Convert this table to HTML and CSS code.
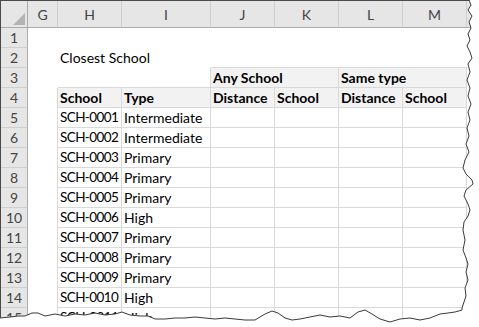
FILE: index.html
```html
<!DOCTYPE html>
<html>
<head>
<meta charset="utf-8">
<link rel="stylesheet" href="styles.css">
</head>
<body>
<div class="frame">
  <div class="sheet">
    <div class="ch corner"><span class="tri"></span></div>
    <div class="ch">G</div><div class="ch">H</div><div class="ch">I</div><div class="ch">J</div><div class="ch">K</div><div class="ch">L</div><div class="ch">M</div><div class="ch last"></div>

    <div class="rh">1</div><div class="c"></div><div class="c"></div><div class="c"></div><div class="c"></div><div class="c"></div><div class="c"></div><div class="c"></div><div class="c"></div>

    <div class="rh">2</div><div class="c"></div><div class="c title">Closest School</div><div class="c"></div><div class="c eb"></div><div class="c eb"></div><div class="c eb"></div><div class="c eb"></div><div class="c"></div>

    <div class="rh">3</div><div class="c"></div><div class="c eb"></div><div class="c eb er"></div><div class="c t th span2">Any School</div><div class="c t th span2">Same type</div><div class="c"></div>

    <div class="rh">4</div><div class="c er"></div><div class="c t th">School</div><div class="c t th">Type</div><div class="c t th">Distance</div><div class="c t th">School</div><div class="c t th">Distance</div><div class="c t th">School</div><div class="c"></div>

    <div class="rh">5</div><div class="c er"></div><div class="c t code">SCH-0001</div><div class="c t">Intermediate</div><div class="c t"></div><div class="c t"></div><div class="c t"></div><div class="c t"></div><div class="c"></div>
    <div class="rh">6</div><div class="c er"></div><div class="c t code">SCH-0002</div><div class="c t">Intermediate</div><div class="c t"></div><div class="c t"></div><div class="c t"></div><div class="c t"></div><div class="c"></div>
    <div class="rh">7</div><div class="c er"></div><div class="c t code">SCH-0003</div><div class="c t">Primary</div><div class="c t"></div><div class="c t"></div><div class="c t"></div><div class="c t"></div><div class="c"></div>
    <div class="rh">8</div><div class="c er"></div><div class="c t code">SCH-0004</div><div class="c t">Primary</div><div class="c t"></div><div class="c t"></div><div class="c t"></div><div class="c t"></div><div class="c"></div>
    <div class="rh">9</div><div class="c er"></div><div class="c t code">SCH-0005</div><div class="c t">Primary</div><div class="c t"></div><div class="c t"></div><div class="c t"></div><div class="c t"></div><div class="c"></div>
    <div class="rh">10</div><div class="c er"></div><div class="c t code">SCH-0006</div><div class="c t">High</div><div class="c t"></div><div class="c t"></div><div class="c t"></div><div class="c t"></div><div class="c"></div>
    <div class="rh">11</div><div class="c er"></div><div class="c t code">SCH-0007</div><div class="c t">Primary</div><div class="c t"></div><div class="c t"></div><div class="c t"></div><div class="c t"></div><div class="c"></div>
    <div class="rh">12</div><div class="c er"></div><div class="c t code">SCH-0008</div><div class="c t">Primary</div><div class="c t"></div><div class="c t"></div><div class="c t"></div><div class="c t"></div><div class="c"></div>
    <div class="rh">13</div><div class="c er"></div><div class="c t code">SCH-0009</div><div class="c t">Primary</div><div class="c t"></div><div class="c t"></div><div class="c t"></div><div class="c t"></div><div class="c"></div>
    <div class="rh">14</div><div class="c er"></div><div class="c t code">SCH-0010</div><div class="c t">High</div><div class="c t"></div><div class="c t"></div><div class="c t"></div><div class="c t"></div><div class="c"></div>
    <div class="rh">15</div><div class="c er"></div><div class="c t code">SCH-0011</div><div class="c t">High</div><div class="c t"></div><div class="c t"></div><div class="c t"></div><div class="c t"></div><div class="c"></div>
  </div>

  <svg class="torn" width="479" height="327" viewBox="0 0 479 327" xmlns="http://www.w3.org/2000/svg">
    <path class="torn-fill" d="M469,0 L471,5 L468,10 L472,16 L469,22 L471,28 L468,34 L470,40 L467,46 L470,52 L472,58 L468,64 L470,72 L467,80 L470,88 L468,96 L471,104 L468,112 L470,120 L467,128 L469,136 L466,144 L469,152 L465,160 L463,168 L466,174 L472,180 L473,184 L466,190 L464,196 L468,204 L470,210 L468,216 L464,222 L463,230 L465,240 L463,250 L466,258 L468,264 L466,272 L468,280 L465,288 L466,296 L464,302 L462,308 L462,310 L455,312 L448,313 L440,314 L430,318 L420,320 L410,318 L400,319 L390,322 L380,319 L372,314 L365,310 L358,312 L350,318 L340,316 L330,317 L320,315 L310,317 L300,319 L292,320 L285,318 L278,313 L272,311 L265,314 L255,320 L245,320 L235,319 L225,318 L215,319 L205,318 L195,317 L185,318 L175,318 L165,319 L155,319 L148,316 L140,316 L130,315 L122,312 L115,314 L105,315 L95,313 L85,315 L75,314 L65,316 L55,314 L45,316 L38,313 L32,313 L25,316 L18,316 L10,317 L0,318 L0,327 L479,327 L479,0 Z"/>
    <polyline class="torn-line" points="469,0 471,5 468,10 472,16 469,22 471,28 468,34 470,40 467,46 470,52 472,58 468,64 470,72 467,80 470,88 468,96 471,104 468,112 470,120 467,128 469,136 466,144 469,152 465,160 463,168 466,174 472,180 473,184 466,190 464,196 468,204 470,210 468,216 464,222 463,230 465,240 463,250 466,258 468,264 466,272 468,280 465,288 466,296 464,302 462,308 462,310 455,312 448,313 440,314 430,318 420,320 410,318 400,319 390,322 380,319 372,314 365,310 358,312 350,318 340,316 330,317 320,315 310,317 300,319 292,320 285,318 278,313 272,311 265,314 255,320 245,320 235,319 225,318 215,319 205,318 195,317 185,318 175,318 165,319 155,319 148,316 140,316 130,315 122,312 115,314 105,315 95,313 85,315 75,314 65,316 55,314 45,316 38,313 32,313 25,316 18,316 10,317 0,318"/>
  </svg>
</div>
</body>
</html>
```

FILE: styles.css
```css
html, body {
  margin: 0;
  padding: 0;
  background: #ffffff;
  overflow: hidden;
}

.frame {
  position: relative;
  width: 479px;
  height: 327px;
  overflow: hidden;
  font-family: Lato, "Liberation Sans", sans-serif;
  font-size: 14px;
  color: #000;
}

.sheet {
  display: grid;
  grid-template-columns: 27px 30px 64px 89px 64px 64px 64px 64px 40px;
  grid-template-rows: 27px repeat(15, 20px);
  border-top: 1px solid #4a4a4a;
  border-left: 1px solid #4a4a4a;
}

.sheet > div {
  box-sizing: border-box;
  white-space: nowrap;
}

.ch {
  background: #e6e6e6;
  border-bottom: 1px solid #ababab;
  border-right: 1px solid #cfcfcf;
  color: #444;
  text-align: center;
  line-height: 24px;
  padding-top: 2px;
}

.ch.last {
  border-right: none;
}

.corner {
  position: relative;
  border-right: 1px solid #ababab;
}

.tri {
  position: absolute;
  right: 2px;
  bottom: 2px;
  width: 0;
  height: 0;
  border-left: 12px solid transparent;
  border-bottom: 12px solid #b4b4b4;
}

.rh {
  background: #e6e6e6;
  border-right: 1px solid #ababab;
  border-bottom: 1px solid #cfcfcf;
  color: #444;
  text-align: center;
  line-height: 19px;
}

.c {
  line-height: 19px;
  padding-left: 2px;
}

.title {
  overflow: visible;
}

.t {
  border-right: 1px solid #d9d9d9;
  border-bottom: 1px solid #d9d9d9;
  overflow: hidden;
}

.code {
  font-size: 13.5px;
  letter-spacing: -0.6px;
}

.eb {
  border-bottom: 1px solid #d9d9d9;
}

.er {
  border-right: 1px solid #d9d9d9;
}

.th {
  background: #f2f2f2;
  font-weight: bold;
}

.span2 {
  grid-column: span 2;
}

.torn {
  position: absolute;
  left: 0;
  top: 0;
}

.torn-fill {
  fill: #ffffff;
}

.torn-line {
  fill: none;
  stroke: #3a3a3a;
  stroke-width: 1;
}
```
